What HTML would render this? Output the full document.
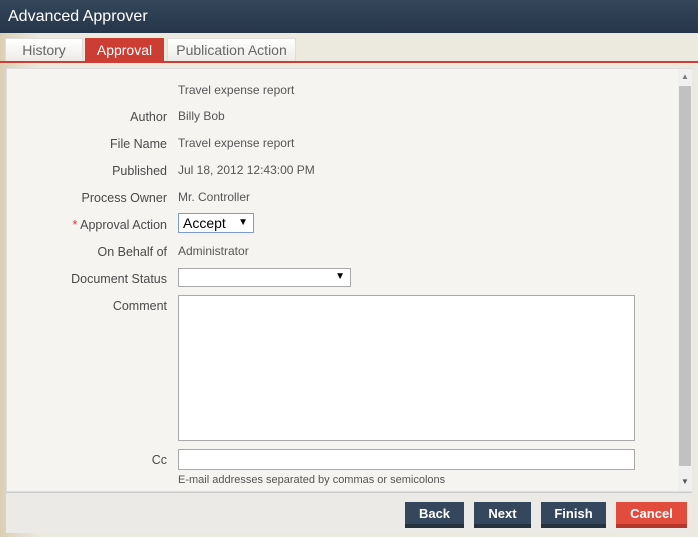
<!DOCTYPE html>
<html><head><style>
body{margin:0;width:698px;height:537px;overflow:hidden;background:linear-gradient(90deg,#d9cfb3,#ece9df 40px,#ece9df);font-family:"Liberation Sans",sans-serif;position:relative}
.title{position:absolute;left:0;top:0;width:698px;height:33px;background:linear-gradient(#34465a,#26354a);color:#fff;font-size:16px;line-height:34px;padding-left:8px;box-sizing:border-box}
.tab{position:absolute;top:38px;height:23px;font-size:14px;line-height:23px;text-align:center;color:#666;background:linear-gradient(#fff,#ecebe8);border:1px solid #ddd;border-bottom:none;box-sizing:border-box}
.red{position:absolute;left:0;top:61px;width:698px;height:2px;background:#cc3d33}
.panel{position:absolute;left:6px;top:68px;width:686px;height:424px;background:#f5f4f1;border:1px solid #ddd;box-sizing:border-box}
.lbl{position:absolute;right:531px;font-size:12.5px;color:#4a4a4a;white-space:nowrap}
.val{position:absolute;left:178px;font-size:12px;color:#555}
.box{position:absolute;background:#fff;border:1px solid #a9a9a9;box-sizing:border-box}
.footer{position:absolute;left:6px;top:492px;width:686px;height:40px;background:#ebeae7;border-top:1px solid #ccc}
.btn{position:absolute;top:502px;height:26px;background:#35475c;border-bottom:4px solid #24313f;color:#fff;font-size:13px;font-weight:bold;text-align:center;line-height:23px;box-sizing:border-box}
</style></head><body>
<div class="title">Advanced Approver</div>
<div class="tab" style="left:5px;width:78px">History</div>
<div class="tab" style="left:85px;width:79px;background:#cc3d33;color:#fff;border-color:#cc3d33">Approval</div>
<div class="tab" style="left:167px;width:129px">Publication Action</div>
<div class="red"></div>
<div class="panel"></div>
<div style="position:absolute;left:678px;top:69px;width:14px;height:422px;background:#f0f0f0"></div>
<div style="position:absolute;left:679px;top:86px;width:12px;height:380px;background:#c1c1c1"></div>
<div style="position:absolute;left:681px;top:72px;font-size:8px;color:#777">▲</div>
<div style="position:absolute;left:681px;top:477px;font-size:8px;color:#555">▼</div>
<div class="val" style="top:83px">Travel expense report</div>
<div class="lbl" style="top:110px">Author</div><div class="val" style="top:109px">Billy Bob</div>
<div class="lbl" style="top:137px">File Name</div><div class="val" style="top:136px">Travel expense report</div>
<div class="lbl" style="top:164px">Published</div><div class="val" style="top:163px">Jul 18, 2012 12:43:00 PM</div>
<div class="lbl" style="top:191px">Process Owner</div><div class="val" style="top:190px">Mr. Controller</div>
<div class="lbl" style="top:218px"><span style="color:#d33">*</span> Approval Action</div>
<div class="box" style="left:178px;top:213px;width:76px;height:20px;border:1px solid #7a9cd3;font-size:14px;color:#000;padding-left:4px;line-height:18px">Accept<span style="position:absolute;right:5px;font-size:10px">▼</span></div>
<div class="lbl" style="top:245px">On Behalf of</div><div class="val" style="top:244px">Administrator</div>
<div class="lbl" style="top:272px">Document Status</div>
<div class="box" style="left:178px;top:268px;width:173px;height:19px"><span style="position:absolute;right:5px;top:2px;font-size:10px">▼</span></div>
<div class="lbl" style="top:299px">Comment</div>
<div class="box" style="left:178px;top:295px;width:457px;height:146px"></div>
<div class="lbl" style="top:453px">Cc</div>
<div class="box" style="left:178px;top:449px;width:457px;height:21px"></div>
<div class="val" style="top:474px;font-size:11px">E-mail addresses separated by commas or semicolons</div>
<div class="footer"></div>
<div class="btn" style="left:405px;width:59px">Back</div>
<div class="btn" style="left:474px;width:57px">Next</div>
<div class="btn" style="left:541px;width:65px">Finish</div>
<div class="btn" style="left:616px;width:71px;background:#e24c3c;border-bottom-color:#b8372b">Cancel</div>
</body></html>
